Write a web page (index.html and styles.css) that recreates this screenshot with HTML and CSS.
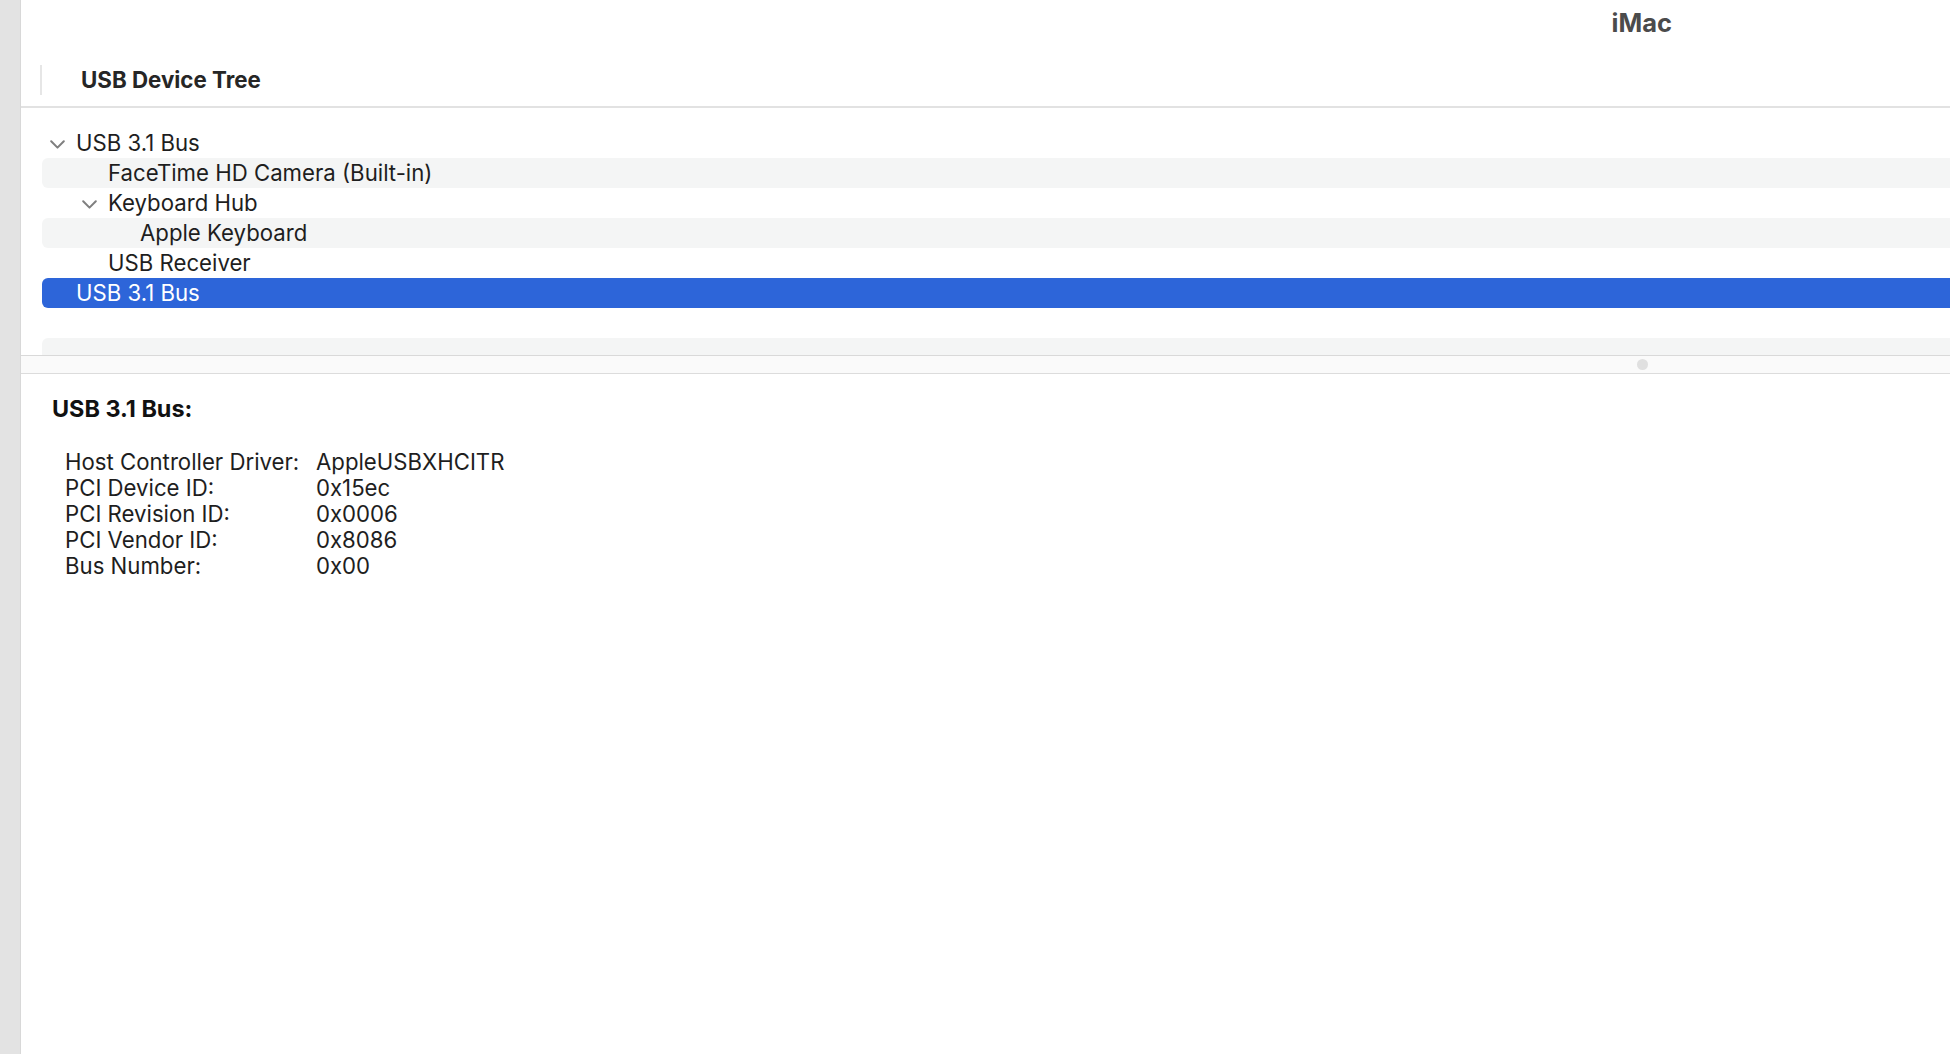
FILE: index.html
```html
<!DOCTYPE html>
<html>
<head>
<meta charset="utf-8">
<link rel="stylesheet" href="styles.css">
</head>
<body>
<div class="window">
  <aside class="sidebar"></aside>
  <main class="content">
    <div class="titlebar"><span class="title">iMac</span></div>
    <div class="table-header">
      <span class="col-sep"></span>
      <span class="col-title">USB Device Tree</span>
    </div>
    <div class="tree">
      <div class="row lvl0"><svg class="chev" viewBox="0 0 15 9"><path d="M1.2 1.2 L7.5 7.6 L13.8 1.2"/></svg><span class="label">USB 3.1 Bus</span></div>
      <div class="row lvl1 stripe"><span class="label">FaceTime HD Camera (Built-in)</span></div>
      <div class="row lvl1"><svg class="chev" viewBox="0 0 15 9"><path d="M1.2 1.2 L7.5 7.6 L13.8 1.2"/></svg><span class="label">Keyboard Hub</span></div>
      <div class="row lvl2 stripe"><span class="label">Apple Keyboard</span></div>
      <div class="row lvl1"><span class="label">USB Receiver</span></div>
      <div class="row lvl0 selected"><span class="label">USB 3.1 Bus</span></div>
      <div class="row"></div>
      <div class="row stripe"></div>
    </div>
    <div class="splitter"><span class="grip"></span></div>
    <section class="detail">
      <h2 class="detail-title">USB 3.1 Bus:</h2>
      <div class="props">
        <span class="k">Host Controller Driver:</span><span class="v">AppleUSBXHCITR</span>
        <span class="k">PCI Device ID:</span><span class="v">0x15ec</span>
        <span class="k">PCI Revision ID:</span><span class="v">0x0006</span>
        <span class="k">PCI Vendor ID:</span><span class="v">0x8086</span>
        <span class="k">Bus Number:</span><span class="v">0x00</span>
      </div>
    </section>
  </main>
</div>
</body>
</html>
```
FILE: styles.css
```css
* { box-sizing: border-box; }
html, body { margin: 0; padding: 0; height: 100%; }
body {
  font-family: "Inter", "Liberation Sans", Arial, sans-serif;
  color: #1e1e1e;
  background: #fff;
  overflow: hidden;
}
.window { display: flex; height: 1054px; width: 1950px; }
.sidebar {
  width: 21px;
  flex: 0 0 21px;
  background: #e3e3e3;
  border-right: 1px solid #d8d8d8;
}
.content { flex: 1; display: flex; flex-direction: column; min-width: 0; }

.titlebar {
  height: 44px;
  display: flex;
  align-items: center;
  justify-content: flex-end;
  padding-right: 278px;
}
.title { font-size: 25.5px; font-weight: 700; color: #4b4b4b; }

.table-header {
  height: 64px;
  display: flex;
  align-items: center;
  padding-top: 9px;
  border-bottom: 2px solid #e2e2e2;
  position: relative;
}
.col-sep {
  width: 2px;
  height: 30px;
  background: #e6e6e6;
  margin-left: 19px;
  margin-right: 39px;
}
.col-title { font-size: 22.3px; font-weight: 700; color: #262626; }

.tree {
  height: 247px;
  padding-top: 20px;
  overflow: hidden;
}
.row {
  height: 30px;
  margin-left: 21px;
  display: flex;
  align-items: center;
  position: relative;
  font-size: 22.2px;
  border-radius: 6px 0 0 6px;
}
.row.stripe { background: #f4f5f5; }
.row.selected { background: #2d65d9; color: #fff; }
.label { white-space: nowrap; margin-top: -1px; }
.lvl0 .label { padding-left: 34px; }
.lvl1 .label { padding-left: 66px; }
.lvl2 .label { padding-left: 98px; }
.chev {
  position: absolute;
  width: 15px;
  height: 9px;
  top: 12px;
  fill: none;
  stroke: #7f7f7f;
  stroke-width: 2;
  stroke-linecap: round;
  stroke-linejoin: round;
}
.lvl0 .chev { left: 8px; }
.lvl1 .chev { left: 40px; }

.splitter {
  height: 19px;
  background: #fafafa;
  border-top: 1px solid #d9d9d9;
  border-bottom: 1px solid #dcdcdc;
  position: relative;
}
.grip {
  position: absolute;
  width: 11px;
  height: 11px;
  border-radius: 50%;
  background: #e0e0e0;
  left: 1616px;
  top: 3px;
}

.detail { padding: 20px 0 0 31px; }
.detail-title {
  margin: 0;
  font-size: 23.4px;
  font-weight: 700;
  color: #111;
  line-height: 30px;
}
.props {
  margin-top: 24px;
  margin-left: 13px;
  display: grid;
  grid-template-columns: 251px auto;
  grid-auto-rows: 26px;
  font-size: 22.2px;
  align-items: center;
  justify-content: start;
}
.k, .v { white-space: nowrap; }
```
